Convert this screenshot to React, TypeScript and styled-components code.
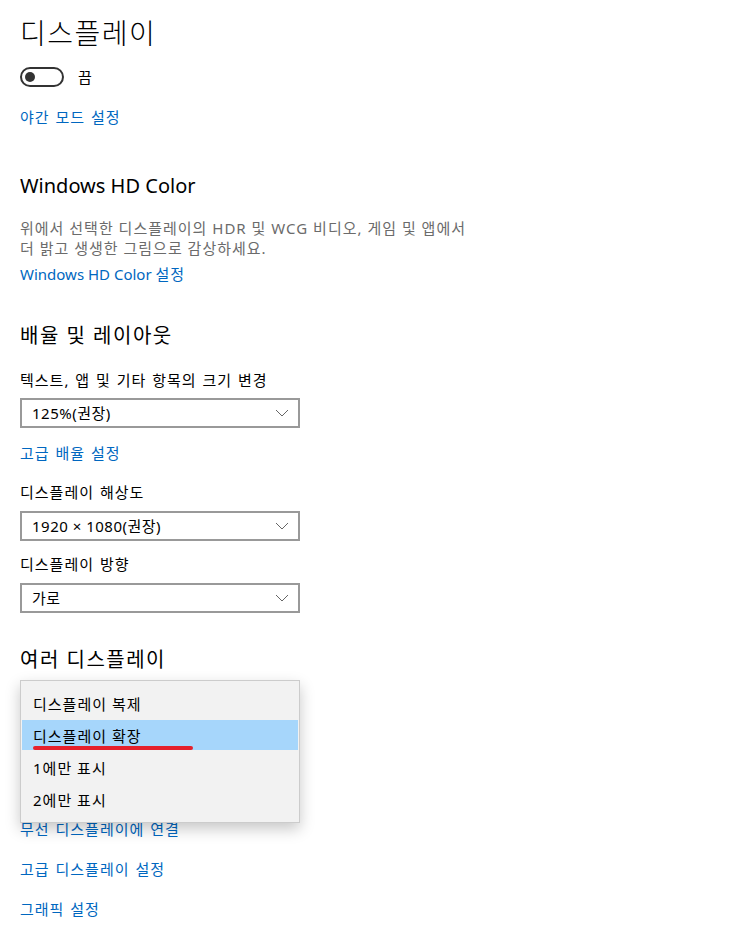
import type { FC } from 'react'
import styled, { createGlobalStyle } from 'styled-components'

const GlobalStyle = createGlobalStyle`
  body {
    margin: 0;
    background: #ffffff;
    font-family: "Noto Sans", "Noto Sans CJK KR", sans-serif;
    color: #000000;
  }
`

const menuItems = ['디스플레이 복제', '디스플레이 확장', '1에만 표시', '2에만 표시']

const App: FC = () => {
  return (
    <>
      <GlobalStyle />
      <Page>
        <Title>디스플레이</Title>
        <ToggleRow>
          <Toggle />
          <ToggleLabel>끔</ToggleLabel>
        </ToggleRow>
        <Link top={20} hangul>야간 모드 설정</Link>

        <SectionTitle top={45}>Windows HD Color</SectionTitle>
        <Description>
          위에서 선택한 디스플레이의 HDR 및 WCG 비디오, 게임 및 앱에서
          <br />
          더 밝고 생생한 그림으로 감상하세요.
        </Description>
        <Link top={6}>
          Windows HD Color <Hangul>설정</Hangul>
        </Link>

        <SectionTitle top={38} hangul>배율 및 레이아웃</SectionTitle>
        <FieldLabel top={20}>텍스트, 앱 및 기타 항목의 크기 변경</FieldLabel>
        <Select top={8} value="125%(권장)" />
        <Link top={15} hangul>고급 배율 설정</Link>
        <FieldLabel top={19}>디스플레이 해상도</FieldLabel>
        <Select top={9} value="1920 × 1080(권장)" />
        <FieldLabel top={13}>디스플레이 방향</FieldLabel>
        <Select top={9} value="가로" />

        <SectionTitle top={33} hangul>여러 디스플레이</SectionTitle>
        <MenuAnchor>
          <Select top={0} value="디스플레이 확장" />
          <Menu>
            {menuItems.map((item, i) => (
              <MenuItem key={item} selected={i === 1}>
                {item}
                {i === 1 && <Underline />}
              </MenuItem>
            ))}
          </Menu>
        </MenuAnchor>
        <Link top={66} hangul>무선 디스플레이에 연결</Link>
        <Link top={20} hangul>고급 디스플레이 설정</Link>
        <Link top={20} hangul>그래픽 설정</Link>
      </Page>
    </>
  )
}

const Select: FC<{ value: string; top: number }> = ({ value, top }) => (
  <SelectBox top={top}>
    <SelectValue>{value}</SelectValue>
    <svg width="14" height="8" viewBox="0 0 14 8">
      <path d="M1 1 L7 7 L13 1" fill="none" stroke="#666" strokeWidth="1" />
    </svg>
  </SelectBox>
)

const Page = styled.div`
  display: flex;
  flex-direction: column;
  align-items: flex-start;
  padding: 13px 20px 30px 20px;
`

const Title = styled.div`
  font-size: 28px;
  line-height: 40px;
  font-weight: 300;
  letter-spacing: 1.5px;
`

const ToggleRow = styled.div`
  display: flex;
  align-items: center;
  gap: 14px;
  margin-top: 14px;
  height: 20px;
`

const Toggle = styled.div`
  box-sizing: border-box;
  width: 44px;
  height: 20px;
  border: 2px solid #333;
  border-radius: 10px;
  position: relative;
  &::after {
    content: "";
    position: absolute;
    left: 3px;
    top: 3px;
    width: 10px;
    height: 10px;
    border-radius: 50%;
    background: #333;
  }
`

const ToggleLabel = styled.span`
  font-size: 15px;
  line-height: 20px;
`

const Hangul = styled.span`
  letter-spacing: 1px;
  word-spacing: 1px;
`

const Link = styled.div<{ top: number; hangul?: boolean }>`
  margin-top: ${p => p.top}px;
  font-size: 15px;
  line-height: 20px;
  color: #0067c0;
  cursor: pointer;
  letter-spacing: ${p => (p.hangul ? '1px' : '0')};
  word-spacing: ${p => (p.hangul ? '1px' : '0')};
`

const SectionTitle = styled.div<{ top: number; hangul?: boolean }>`
  margin-top: ${p => p.top}px;
  font-size: 20px;
  line-height: 28px;
  letter-spacing: ${p => (p.hangul ? '1.5px' : '0')};
`

const Description = styled.div`
  margin-top: 18px;
  font-size: 15px;
  line-height: 20px;
  color: #6b6b6b;
  letter-spacing: 1px;
`

const FieldLabel = styled.div<{ top: number }>`
  margin-top: ${p => p.top}px;
  font-size: 15px;
  line-height: 20px;
  letter-spacing: 1px;
  word-spacing: 1px;
`

const SelectBox = styled.div<{ top: number }>`
  box-sizing: border-box;
  margin-top: ${p => p.top}px;
  width: 280px;
  height: 30px;
  border: 2px solid #999;
  background: #fff;
  display: flex;
  align-items: center;
  justify-content: space-between;
  padding: 0 9px 0 10px;
`

const SelectValue = styled.span`
  font-size: 15px;
  line-height: 20px;
  letter-spacing: 0.5px;
`

const MenuAnchor = styled.div`
  position: relative;
  margin-top: 49px;
`

const Menu = styled.div`
  position: absolute;
  top: -43px;
  left: 0;
  box-sizing: border-box;
  width: 280px;
  padding: 7px 1px 8px 1px;
  background: #f2f2f2;
  border: 1px solid #cccccc;
  box-shadow: 0 6px 14px rgba(0, 0, 0, 0.22);
  display: flex;
  flex-direction: column;
  gap: 2px;
  z-index: 2;
`

const MenuItem = styled.div<{ selected: boolean }>`
  position: relative;
  height: 30px;
  display: flex;
  align-items: center;
  padding-left: 11px;
  font-size: 15px;
  letter-spacing: 1px;
  background: ${p => (p.selected ? '#a6d6fb' : 'transparent')};
`

const Underline = styled.span`
  position: absolute;
  left: 11px;
  top: 26px;
  width: 160px;
  height: 4px;
  border-radius: 2px;
  background: #e5202b;
`

export default App
